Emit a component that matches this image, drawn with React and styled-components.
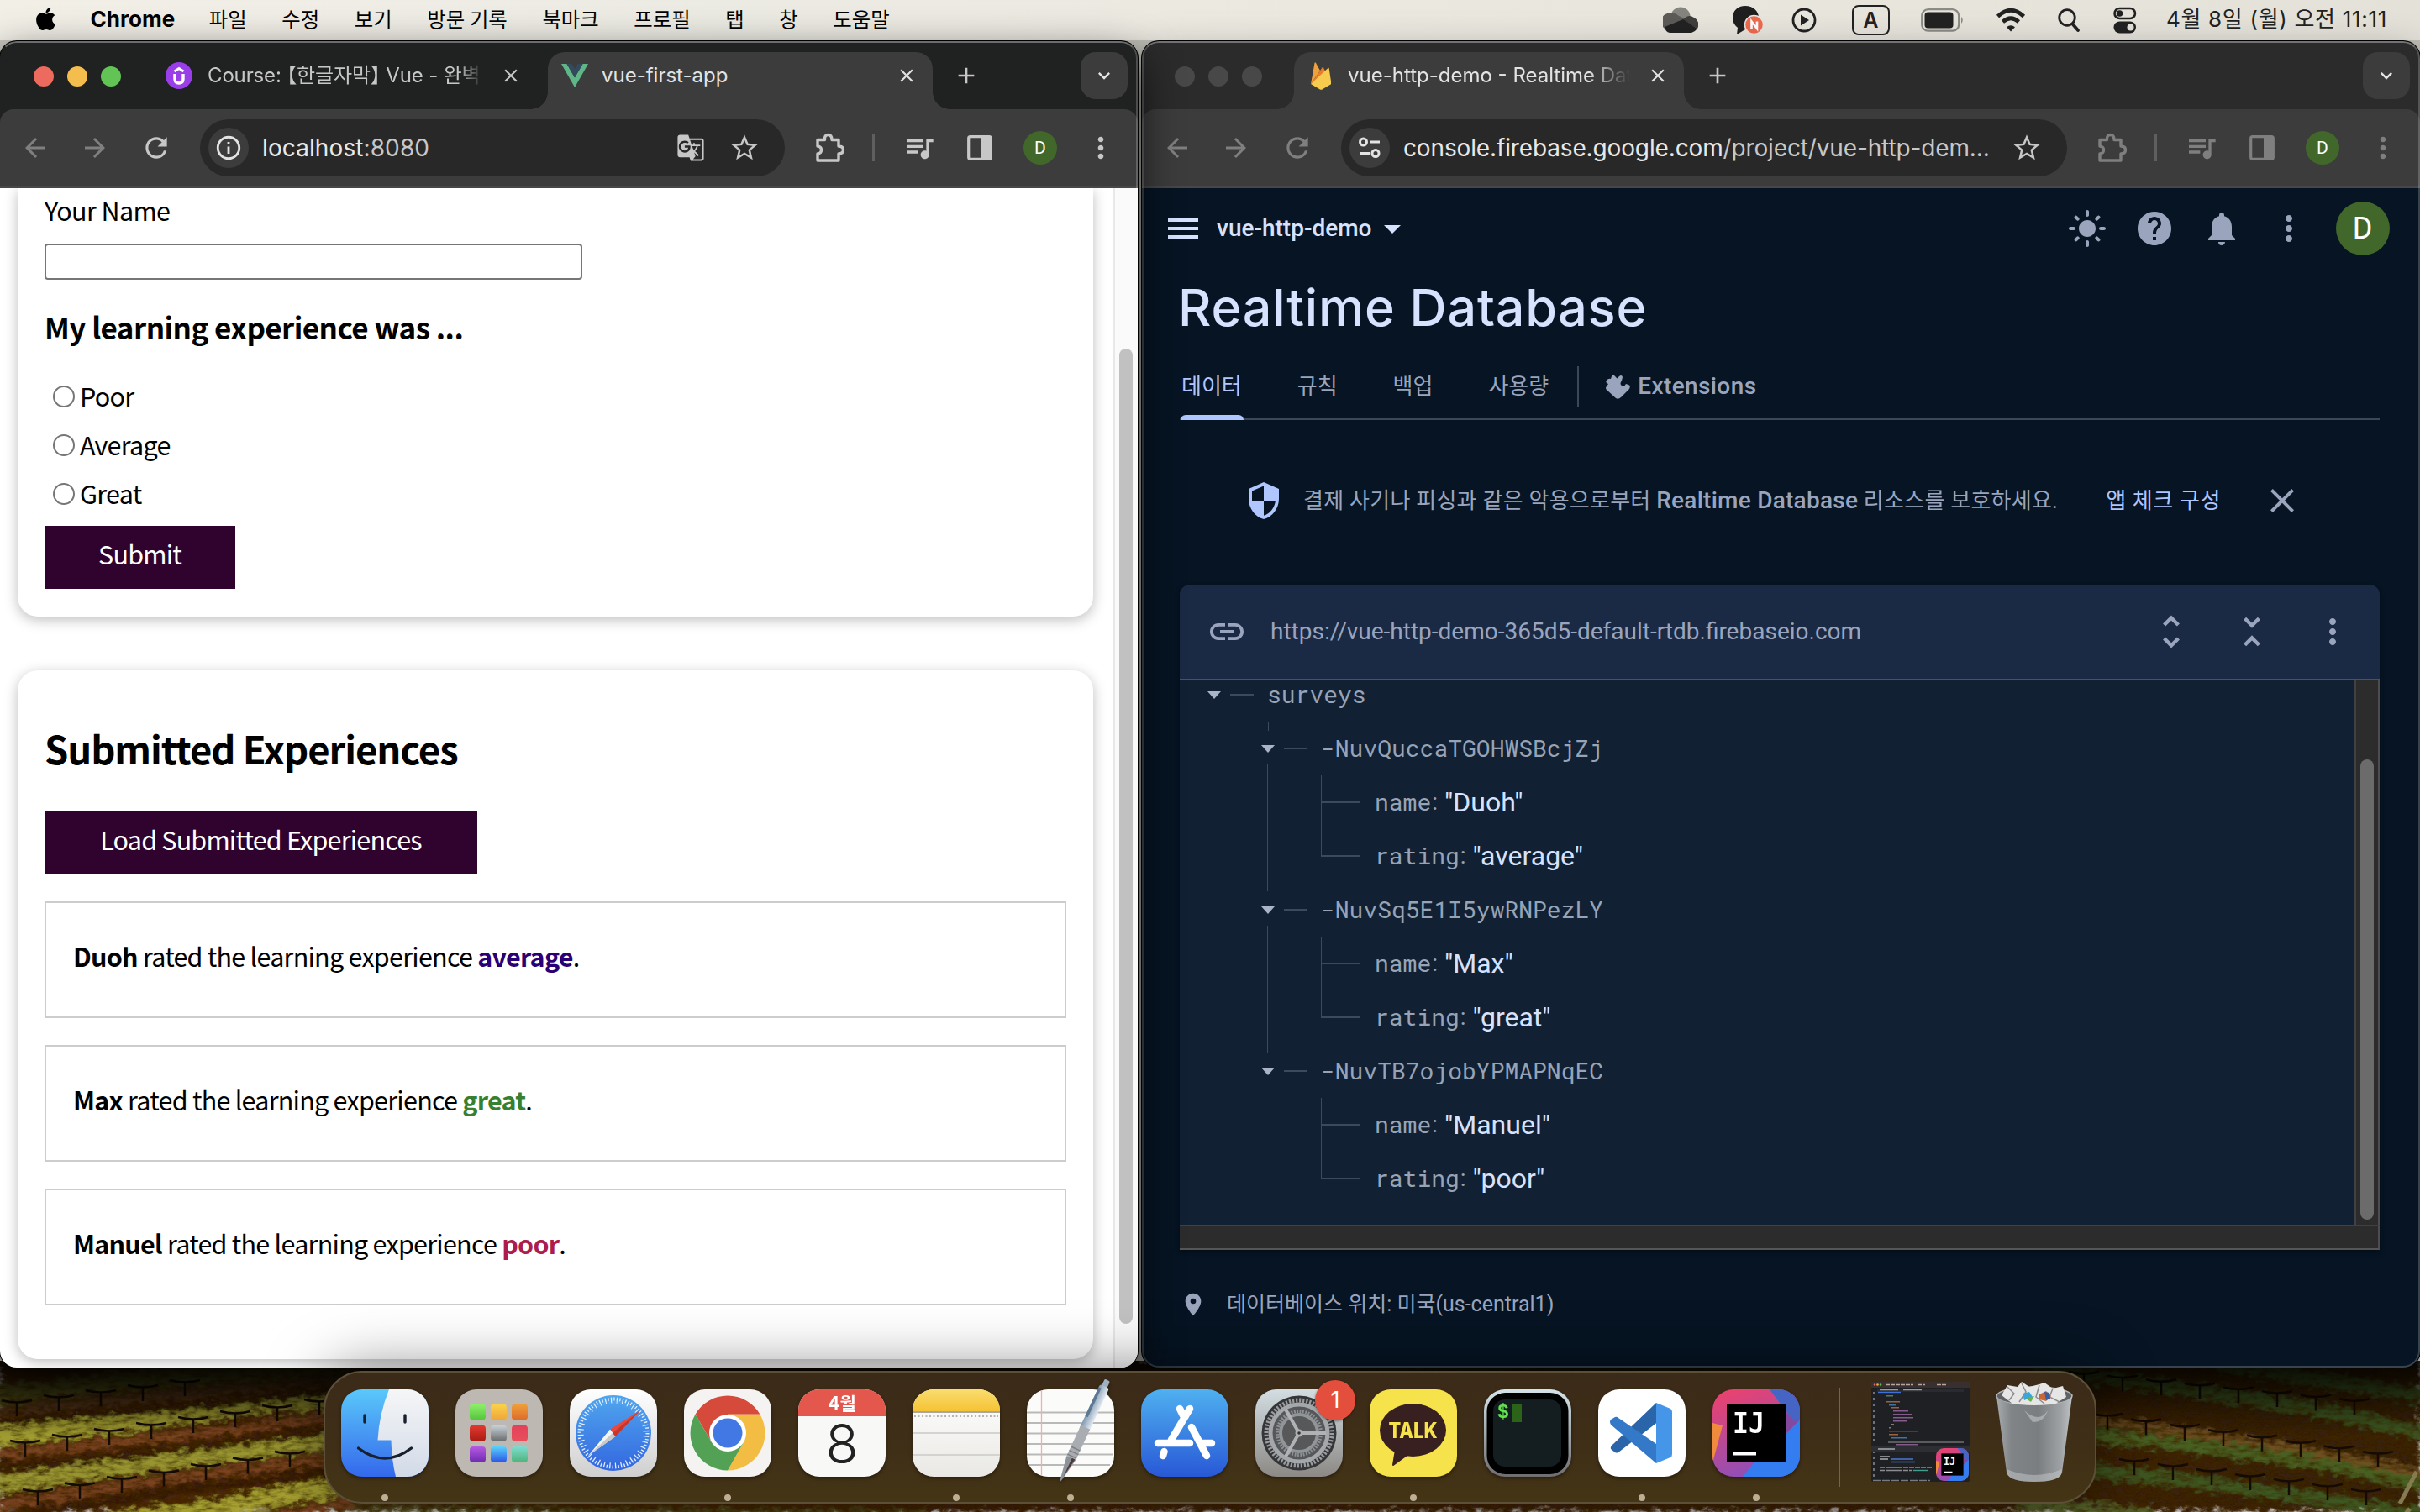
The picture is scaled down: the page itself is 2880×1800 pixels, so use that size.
import React from "react";
import styled, { createGlobalStyle, css } from "styled-components";
import { FaApple } from "react-icons/fa";
import {
  MdArrowBack, MdArrowForward, MdRefresh, MdGTranslate, MdStarBorder, MdQueueMusic, MdMoreVert, MdClose, MdAdd,
  MdKeyboardArrowDown, MdMenu, MdArrowDropDown, MdLightMode, MdHelp, MdNotifications, MdSecurity, MdLink,
  MdUnfoldMore, MdUnfoldLess, MdLocationOn, MdOutlineInfo,
} from "react-icons/md";

const UI = `"Inter", "Noto Sans CJK KR", sans-serif`;
const PAGE = `"Noto Sans CJK KR", sans-serif`;
const CONSOLE = `"Roboto", "Noto Sans CJK KR", sans-serif`;
const MONO = `"Roboto Mono", "Liberation Mono", monospace`;

const Global = createGlobalStyle`
  *, *::before, *::after { box-sizing: border-box; }
  body { margin: 0; background: #1c1108; }
  svg { display: block; flex: none; }
`;

/* ---------- desktop ---------- */
const Desktop = styled.div`
  position: relative;
  display: flex;
  flex-direction: column;
  width: 2880px;
  height: 1800px;
  overflow: hidden;
  font-family: ${UI};
  background: linear-gradient(90deg, #c9c8c0, #bfbdb5);
`;
const WallpaperSvg = styled.svg`
  position: absolute;
  left: 0;
  bottom: 0;
`;
const MenuBar = styled.header`
  position: relative;
  display: flex;
  justify-content: space-between;
  align-items: center;
  height: 48px;
  padding: 0 39px 0 39px;
  background: linear-gradient(90deg, #f2efe7 0%, #ecebe3 30%, #ece9e1 48%, #e8e5dd 75%, #e4e1d9 100%);
  color: #000;
`;
const MenuItems = styled.div`
  display: flex;
  align-items: center;
  gap: 41.6px;
  height: 46px;
  margin-bottom: 3px;
  font-size: 24.4px;
  line-height: 46px;
  word-spacing: -1px;
  > svg { margin: -1px -4px 0 0; }
`;
const AppName = styled.b`
  font-size: 26px;
  font-weight: 700;
  margin: 0 -1px 0 0;
`;
const StatusItems = styled.div`
  display: flex;
  align-items: center;
  color: #222;
`;
const Slot = styled.span`
  display: flex;
  flex: none;
  justify-content: center;
  align-items: center;
  width: ${(p) => p.$w || 40}px;
  height: ${(p) => p.$h || p.$w || 40}px;
  margin-left: ${(p) => p.$ml || 0}px;
  color: ${(p) => p.$c || "inherit"};
`;
const Clock = styled.span`
  margin-left: 35px;
  font-size: 26px;
  line-height: 44px;
  letter-spacing: 0.7px;
  margin-bottom: 3px;
  white-space: nowrap;
`;
const Windows = styled.main`
  position: relative;
  display: flex;
  gap: 5px;
  height: 1579px;
  margin-top: 1px;
`;

/* ---------- browser window ---------- */
const Window = styled.section`
  position: relative;
  display: flex;
  flex-direction: column;
  flex: none;
  width: ${(p) => p.$w}px;
  border-radius: 20px;
  overflow: hidden;
  z-index: ${(p) => (p.$front ? 2 : 1)};
  background: ${(p) => (p.$front ? "#202121" : "#2b2b2b")};
  box-shadow: 0 0 0 1px #000, 0 18px 50px ${(p) => (p.$front ? "rgba(0,0,0,.75)" : "rgba(0,0,0,.4)")};
  &::after {
    content: "";
    position: absolute;
    inset: 0;
    border-radius: 20px;
    border: 2px solid rgba(255, 255, 255, 0.2);
    border-top-color: rgba(255, 255, 255, 0.34);
    ${(p) => p.$front && css`border-left-color: transparent; border-bottom-color: transparent;`}
    pointer-events: none;
  }
`;
const TabStrip = styled.div`
  display: flex;
  align-items: flex-end;
  height: 81px;
  padding: 0 12px 0 ${(p) => p.$pl}px;
`;
const Lights = styled.div`
  display: flex;
  align-items: center;
  gap: 16px;
  height: 56px;
  margin-bottom: 11px;
`;
const Light = styled.i`
  width: 24px;
  height: 24px;
  border-radius: 50%;
  background: ${(p) => p.$c};
`;
const Tab = styled.div`
  position: relative;
  display: flex;
  align-items: center;
  flex: none;
  width: ${(p) => p.$w}px;
  height: 68px;
  margin-left: ${(p) => p.$ml}px;
  padding: 0 18px 12px 16px;
  border-radius: 20px 20px 0 0;
  color: ${(p) => (p.$active ? "#e3e3e3" : "#c7c7c7")};
  ${(p) => p.$active && css`
    background: #3c3c3c;
    &::before, &::after {
      content: "";
      position: absolute;
      bottom: 0;
      width: 20px;
      height: 20px;
      background: radial-gradient(circle at 0 0, transparent 19.5px, #3c3c3c 20px);
    }
    &::before { left: -20px; }
    &::after { right: -20px; background: radial-gradient(circle at 100% 0, transparent 19.5px, #3c3c3c 20px); }
  `}
`;
const TabTitle = styled.span`
  flex: 1;
  margin-left: ${(p) => p.$ml || 16}px;
  margin-right: 20px;
  overflow: hidden;
  font-size: 24px;
  font-weight: 400;
  line-height: 40px;
  white-space: nowrap;
  letter-spacing: ${(p) => p.$ls || 0}px;
  font-feature-settings: "halt";
  ${(p) => p.$fade && css`
    mask-image: linear-gradient(90deg, #000 calc(100% - ${p.$fade}px), transparent);
  `}
`;
const ChevronButton = styled.div`
  display: flex;
  justify-content: center;
  align-items: center;
  width: 56px;
  height: 56px;
  margin: 0 0 12px auto;
  border-radius: 18px;
  background: #3c3c3c;
  color: #e3e3e3;
`;
const Toolbar = styled.div`
  display: flex;
  align-items: center;
  height: 94px;
  padding: 1px 0 0 ${(p) => p.$pl}px;
  border-radius: 16px 16px 0 0;
  border-bottom: 3px solid #474747;
  background: #3c3c3c;
  color: ${(p) => (p.$dim ? "#7f7f7f" : "#c7c7c7")};
`;
const Omnibox = styled.div`
  display: flex;
  align-items: center;
  flex: none;
  width: ${(p) => p.$w}px;
  height: 68px;
  margin-left: ${(p) => p.$ml}px;
  padding: 0 29px 0 10px;
  border-radius: 34px;
  background: #282828;
  color: #c7c7c7;
`;
const SiteInfo = styled.span`
  display: flex;
  justify-content: center;
  align-items: center;
  flex: none;
  width: 48px;
  height: 48px;
  border-radius: 50%;
  background: #3c3c3c;
  color: #e3e3e3;
`;
const Address = styled.span`
  margin-left: 16px;
  margin-right: auto;
  font-size: 28px;
  line-height: 40px;
  white-space: nowrap;
  letter-spacing: ${(p) => p.$ls || 0}px;
  color: #c7c7c7;
  b { font-weight: 400; color: #e8e8e8; }
`;
const Divider = styled.i`
  width: 3px;
  height: 32px;
  margin-left: ${(p) => p.$ml}px;
  background: #5f5f5f;
`;
const Avatar = styled.span`
  display: flex;
  flex: none;
  justify-content: center;
  align-items: center;
  width: ${(p) => p.$size}px;
  height: ${(p) => p.$size}px;
  margin-left: ${(p) => p.$ml}px;
  border-radius: 50%;
  background: #41682a;
  color: #fff;
  font: 400 ${(p) => p.$fs}px/1 "Roboto", sans-serif;
`;

/* ---------- survey page ---------- */
const SurveyPage = styled.div`
  display: flex;
  flex: 1;
  background: #fff;
  font-family: ${PAGE};
  font-size: 30.5px;
  letter-spacing: -0.75px;
  color: #000;
  overflow: hidden;
`;
const SurveyColumn = styled.div`
  display: flex;
  flex: 1;
  flex-direction: column;
  gap: 64px;
  height: 1500px;
  padding: 0 24px 0 21px;
`;
const Card = styled.div`
  display: flex;
  flex-direction: column;
  align-items: flex-start;
  flex: none;
  height: ${(p) => p.$h}px;
  padding: ${(p) => p.$pt}px 32px 0;
  border-radius: ${(p) => (p.$cut ? "0 0 24px 24px" : "24px")};
  background: #fff;
  box-shadow: 0 4px 16px rgba(0, 0, 0, 0.26);
`;
const FieldLabel = styled.label`
  letter-spacing: -0.6px;
  line-height: 42px;
`;
const TextField = styled.div`
  width: 640px;
  height: 43px;
  margin-top: 19px;
  border: 2px solid #767676;
  border-radius: 4px;
`;
const GroupTitle = styled.h3`
  margin: 34px 0 0;
  font-size: 35px;
  font-weight: 700;
  letter-spacing: -0.58px;
  line-height: 44px;
`;
const RadioList = styled.div`
  display: flex;
  flex-direction: column;
  gap: 14px;
  margin-top: 39px;
  padding-left: 10px;
`;
const RadioRow = styled.label`
  display: flex;
  align-items: center;
  gap: 6px;
  height: 44px;
`;
const RadioText = styled.span`
  margin-bottom: 2px;
`;
const RadioDot = styled.i`
  width: 26px;
  height: 26px;
  border: 2px solid #767676;
  border-radius: 50%;
`;
const ActionButton = styled.div`
  width: ${(p) => p.$w}px;
  height: 75px;
  margin-top: ${(p) => p.$mt}px;
  background: #30022e;
  color: #fff;
  text-align: center;
  letter-spacing: -0.8px;
  line-height: 66px;
  white-space: nowrap;
`;
const SectionTitle = styled.h2`
  margin: 0;
  font-size: 45.4px;
  font-weight: 700;
  letter-spacing: -1.05px;
  line-height: 56px;
`;
const ResultItem = styled.div`
  width: 1216px;
  height: 139px;
  margin-top: 32px;
  padding-left: 32px;
  border: 2px solid #ccc;
  line-height: 127px;
  white-space: nowrap;
`;
const Rating = styled.b`
  color: ${(p) => ({ average: "#2c0075", great: "#36802f", poor: "#ad1c4e" })[p.$kind]};
`;
const PageScroll = styled.div`
  width: 29px;
  padding: 191px 0 0 5px;
  border-left: 2px solid #e8e8e8;
  background: #fafafa;
`;
const PageThumb = styled.div`
  width: 16px;
  height: 1161px;
  border-radius: 8px;
  background: #c1c1c1;
`;

/* ---------- firebase console ---------- */
const Console = styled.div`
  flex: 1;
  display: flex;
  flex-direction: column;
  background: #061423;
  font-family: ${CONSOLE};
  color: #9aa5bd;
`;
const ConsoleBar = styled.div`
  display: flex;
  align-items: center;
  height: 96px;
  padding: 0 36px 0 25px;
`;
const ProjectName = styled.span`
  margin-left: 16px;
  font-size: 28px;
  font-weight: 500;
  line-height: 40px;
  color: #d7e2ff;
`;
const ConsoleTitle = styled.h1`
  margin: 6px 0 0 43px;
  font: 500 61px/80px "Inter", sans-serif;
  letter-spacing: 0.8px;
  color: #d7e2ff;
`;
const Tabs = styled.nav`
  display: flex;
  align-items: center;
  height: 92px;
  margin: 2px 48px 0 45px;
  padding-top: 14px;
  border-bottom: 2px solid #3c4858;
  font-size: 26px;
  line-height: 40px;
`;
const ConsoleTab = styled.span`
  position: relative;
  margin-left: ${(p) => p.$ml}px;
  padding: 0 1px;
  white-space: nowrap;
  color: ${(p) => (p.$active ? "#b0c6ff" : "inherit")};
  ${(p) => p.$active && css`
    &::after {
      content: "";
      position: absolute;
      left: 0;
      right: -1px;
      bottom: -20px;
      height: 6px;
      border-radius: 6px 6px 0 0;
      background: #b0c6ff;
    }
  `}
`;
const TabRule = styled.i`
  width: 2px;
  height: 48px;
  margin-left: 33px;
  background: #3c4858;
`;
const ExtensionsLabel = styled.span`
  margin-left: 9px;
  font-size: 28px;
  font-weight: 500;
  letter-spacing: 0.4px;
`;
const Banner = styled.div`
  display: flex;
  align-items: center;
  height: 80px;
  margin: 56px 0 60px 121px;
  font-size: 26px;
  line-height: 40px;
  white-space: nowrap;
  b { font-size: 28px; font-weight: 500; }
`;
const BannerText = styled.span`
  margin-left: 23px;
  letter-spacing: 0.25px;
`;
const BannerLink = styled.span`
  margin-left: 57px;
  letter-spacing: 0.6px;
  color: #b0c6ff;
`;
const Panel = styled.div`
  margin: 0 48px 0 45px;
  height: 792px;
  display: flex;
  flex-direction: column;
  border-radius: 12px 12px 0 0;
  box-shadow: 0 2px 6px rgba(0, 0, 0, 0.4);
  overflow: hidden;
`;
const PanelHead = styled.div`
  display: flex;
  align-items: center;
  flex: none;
  height: 114px;
  padding-left: 32px;
  border-bottom: 2px solid #44546f;
  background: #1b2a44;
`;
const DbUrl = styled.span`
  margin-left: 28px;
  margin-right: auto;
  font-size: 28px;
  line-height: 38px;
`;
const PanelBody = styled.div`
  display: grid;
  grid-template-columns: 1fr 30px;
  grid-template-rows: 1fr 30px;
  flex: 1;
  min-height: 0;
`;
const Tree = styled.div`
  padding-left: 33px;
  background: #112033;
  overflow: hidden;
`;
const TreeTrack = styled.div`
  padding: 94px 0 0 5px;
  border-left: 2px solid #424242;
  border-right: 2px solid #4d4d4d;
  background: #2c2c2c;
`;
const TreeThumb = styled.div`
  width: 16px;
  height: 548px;
  border-radius: 8px;
  background: #6b6b6b;
`;
const TreeFloor = styled.div`
  grid-column: 1 / 3;
  border-top: 2px solid #414141;
  border-bottom: 2px solid #565656;
  border-right: 2px solid #4d4d4d;
  background: #2c2c2c;
`;
const NodeRow = styled.div`
  display: flex;
  align-items: center;
  height: ${(p) => p.$h || 64}px;
  font: 28px/40px ${MONO};
  color: #97a3b6;
`;
const Caret = styled.i`
  border: 8px solid transparent;
  border-top: 9px solid #a9b4c8;
  border-bottom: 0;
`;
const Dash = styled.i`
  width: 28px;
  height: 2px;
  margin: 0 16px 0 11px;
  background: #3c4a5e;
`;
const Branch = styled.div`
  margin: 15px 0 0 64px;
`;
const NodeHead = styled(NodeRow)`
  position: relative;
  ${(p) => p.$first && css`
    &::before {
      content: "";
      position: absolute;
      left: 7.5px;
      top: 0;
      height: 11px;
      border-left: 1.5px solid #3c4a5e;
    }
  `}
`;
const Leaves = styled.div`
  position: relative;
  display: flex;
  flex-direction: column;
  padding-left: 70px;
  ${(p) => !p.$last && css`
    &::before {
      content: "";
      position: absolute;
      left: 7px;
      top: -13px;
      height: 151px;
      border-left: 1.5px solid #3c4a5e;
    }
  `}
`;
const Leaf = styled.div`
  position: relative;
  display: flex;
  align-items: center;
  height: 64px;
  padding-left: 65px;
  font: 28px/40px ${MONO};
  color: #97a3b6;
  white-space: nowrap;
  &::before {
    content: "";
    position: absolute;
    left: 1px;
    top: ${(p) => (p.$first ? 0 : -32)}px;
    width: 47px;
    height: ${(p) => (p.$first ? 33 : 65)}px;
    border-left: 1.5px solid #3c4a5e;
    border-bottom: 2px solid #3c4a5e;
  }
`;
const Value = styled.span`
  margin-left: 8px;
  font: 32px/40px "Roboto", sans-serif;
  color: #d7e2ff;
`;
const Colon = styled.span`
  margin-left: 1px;
  font: 28px/40px "Roboto", sans-serif;
`;
const Location = styled.div`
  display: flex;
  align-items: center;
  gap: 24px;
  margin: 45px 0 0 45px;
  font-size: 25px;
  line-height: 40px;
`;

/* ---------- dock ---------- */
const DockArea = styled.footer`
  position: relative;
  z-index: 3;
  display: flex;
  justify-content: center;
  padding-top: 4px;
`;
const Dock = styled.div`
  display: flex;
  width: 2110px;
  height: 158px;
  padding: 20px 0 0 19px;
  border: 2px solid #5c4f38;
  border-radius: 46px;
  background: linear-gradient(180deg, #3a2a18 0%, #402f17 60%, #443515 100%);
  box-shadow: 0 0 70px rgba(0, 0, 0, 0.5);
`;
const DockItem = styled.div`
  position: relative;
  display: flex;
  flex: none;
  flex-direction: column;
  align-items: center;
  width: 104px;
  margin-right: 32px;
  svg { overflow: visible; filter: drop-shadow(0 2px 2px rgba(0, 0, 0, 0.4)); }
`;
const RunningDot = styled.i`
  width: 8px;
  height: 8px;
  margin-top: 21px;
  border-radius: 50%;
  background: #bfae94;
`;
const Badge = styled.span`
  position: absolute;
  right: -15px;
  top: -11px;
  width: 48px;
  height: 48px;
  border-radius: 50%;
  background: #e44f3d;
  color: #fff;
  font-size: 27px;
  line-height: 48px;
  text-align: center;
  box-shadow: 0 1px 3px rgba(0, 0, 0, 0.4);
`;
const DockRule = styled.i`
  flex: none;
  width: 2px;
  height: 118px;
  margin: -2px 37px 0 14px;
  background: #73644c;
`;
const DockExtra = styled.div`
  flex: none;
  margin-top: -9px;
  margin-right: 31px;
`;

/* ---------- drawings ---------- */
const vines = (n, x0, y0, dx, slope) =>
  Array.from({ length: n }, (_, i) => {
    const x = x0 + i * dx;
    const y = y0 + i * dx * slope;
    return `M${x} ${y + 16}V${y}M${x - 18} ${y - 3}Q${x} ${y + 2} ${x + 18} ${y - 3}`;
  }).join("");

const Wallpaper = () => (
  <WallpaperSvg width="2880" height="180" viewBox="0 0 2880 180">
    <defs>
      <filter id="grass" x="0" y="0" width="100%" height="100%">
        <feTurbulence type="fractalNoise" baseFrequency="0.09 0.14" numOctaves="3" seed="4" result="n" />
        <feGaussianBlur in="SourceGraphic" stdDeviation="2.5" result="b" />
        <feDisplacementMap in="b" in2="n" scale="20" xChannelSelector="R" yChannelSelector="G" result="d" />
        <feTurbulence type="fractalNoise" baseFrequency="0.07 0.2" numOctaves="4" seed="9" result="m0" />
        <feColorMatrix in="m0" type="matrix" values="0 0 0 0 0.05  0 0 0 0 0.02  0 0 0 0 0  0 1.9 0 0 -0.76" result="s" />
        <feComposite in="s" in2="d" operator="in" result="m" />
        <feMerge><feMergeNode in="d" /><feMergeNode in="m" /></feMerge>
      </filter>
      <linearGradient id="soil" x1="0" x2="1"><stop offset="0" stopColor="#4a2710" /><stop offset="1" stopColor="#38200f" /></linearGradient>
      <linearGradient id="topShade" x1="0" x2="0" y1="0" y2="1"><stop offset="0" stopColor="#000" stopOpacity=".8" /><stop offset=".5" stopColor="#000" stopOpacity="0" /></linearGradient>
    </defs>
    <g filter="url(#grass)">
      <rect width="2880" height="180" fill="url(#soil)" />
      <g fill="none" strokeWidth="22">
        <path d="M-20 42L180 22L420 2" stroke="#56541a" />
        <path d="M-20 92L150 74L300 52L420 46" stroke="#a09c32" />
        <path d="M-20 150L100 132L200 118L300 106L420 92" stroke="#989430" />
        <path d="M130 192L260 176L340 160L420 148" stroke="#a59f30" />
        <path d="M400 174L700 180L1100 182" stroke="#4f4a1a" strokeWidth="8" />
      </g>
      <g fill="none" stroke="#7c4521" strokeWidth="10">
        <path d="M-20 114L150 96L420 64" /><path d="M-20 62L200 42L420 20" stroke="#57381b" /><path d="M-20 176L200 140L420 114" /><path d="M330 186L420 168" />
      </g>
      <g fill="none" stroke="#341a0b" strokeWidth="10"><path d="M-20 130L150 112L420 80" /><path d="M-20 192L200 156L420 128" /><path d="M-20 74L200 56L420 34" /></g>
      <g fill="none" stroke="#3e5620" strokeWidth="16">
        <path d="M2420 6L2600 34L2750 56L2900 90" />
        <path d="M2440 84L2600 100L2750 120L2900 150" stroke="#475e22" />
        <path d="M2440 124L2640 148L2800 170L2900 188" />
        <path d="M2400 168L2560 184" stroke="#55622a" /><path d="M2640 4L2900 44" />
      </g>
      <g fill="none" stroke="#6e5024" strokeWidth="10"><path d="M2440 64L2620 88L2750 108L2900 138" /></g>
    </g>
    <path d={vines(5, 20, 50, 50, -0.12) + vines(8, 30, 98, 50, -0.14) + vines(7, 45, 156, 50, -0.15) + vines(8, 2480, 16, 46, 0.1) + vines(8, 2508, 66, 46, 0.14) + vines(7, 2540, 120, 46, 0.13)} stroke="#150b05" strokeWidth="2.5" fill="none" />
    <path d="M2876 132L2856 170M2868 176L2856 190" stroke="#857a50" strokeWidth="5" />
    <rect width="2880" height="180" fill="url(#topShade)" />
  </WallpaperSvg>
);

const OneDrive = () => (
  <svg width="42" height="32" viewBox="0 0 42 32">
    <circle cx="21" cy="12" r="11.5" fill="#85847f" />
    <path d="M4 27a10 10 0 0 1 6-19q5-1 9 3l9 4-20 14z" fill="#5c5b58" />
    <path d="M24 16q6-8 13-3a9 9 0 0 1 4 13z" fill="#403f3d" />
    <path d="M2 24L24 15L41 26Q38 30 34 31H8Q3 30 2 24z" fill="#222" />
  </svg>
);
const TalkStatus = () => (
  <svg width="38" height="36" viewBox="0 0 38 36">
    <path d="M16 1C7 1 1 7 1 15c0 5 2 9 6 12l-1 8 10-6c9 0 16-6 16-14S25 1 16 1z" fill="#1f1f1f" />
    <circle cx="26.500" cy="23.500" r="11" fill="#ee6a50" stroke="#e8e5dd" strokeWidth="1.500" />
    <path d="M23.500 28v-8.500l6.500 8.500v-8.500" fill="none" stroke="#fff" strokeWidth="2.600" />
  </svg>
);
const PlayStatus = () => (
  <svg width="30" height="34" viewBox="0 0 30 34">
    <circle cx="15" cy="17" r="13" fill="none" stroke="#222" strokeWidth="2.800" />
    <path d="M11 10.500v13l10-6.500z" fill="#222" />
  </svg>
);
const Battery = () => (
  <svg width="52" height="28" viewBox="0 0 52 28">
    <rect x="1.200" y="1.200" width="44" height="25.500" rx="7.500" fill="none" stroke="#8b8a85" strokeWidth="2.200" />
    <rect x="4.500" y="4.500" width="34" height="19" rx="4" fill="#222" />
    <path d="M48 10q3.500 4 0 8z" fill="#8b8a85" />
  </svg>
);
const InputSource = styled.span`
  display: flex;
  justify-content: center;
  align-items: center;
  width: 45px;
  height: 36px;
  margin-left: 42px;
  border: 2.5px solid #222;
  border-radius: 8px;
  font-size: 25px;
  font-weight: 600;
  line-height: 30px;
`;
const Wifi = () => (
  <svg width="36" height="30" viewBox="0 0 36 30" fill="none" stroke="#222" strokeWidth="4.600">
    <path d="M2.500 10.500Q18-4 33.500 10.500" /><path d="M8.500 17Q18 8.500 27.500 17" /><path d="M13 23.300Q18 19 23 23.300L18 28.500z" fill="#222" stroke="none" />
  </svg>
);
const Loupe = () => (
  <svg width="27" height="30" viewBox="0 0 27 30" fill="none" stroke="#222">
    <circle cx="11" cy="12" r="9.300" strokeWidth="2.800" /><path d="M17.500 19.500L24 27" strokeWidth="3.800" strokeLinecap="round" />
  </svg>
);
const ControlCentre = () => (
  <svg width="28" height="32" viewBox="0 0 28 32">
    <rect x="1.500" y="2" width="24.500" height="12" rx="6" fill="none" stroke="#222" strokeWidth="2.600" /><circle cx="7.500" cy="8" r="3.800" fill="#222" />
    <rect x=".5" y="17.500" width="26.500" height="14" rx="7" fill="#222" /><circle cx="20.500" cy="24.500" r="4" fill="#e6e3db" />
  </svg>
);
const UdemyMark = () => (
  <svg width="32" height="32" viewBox="0 0 32 32"><circle cx="16" cy="16" r="16" fill="#9a3eea" />
    <path d="M11 14v6q0 5 5 5t5-5v-6" fill="none" stroke="#fff" strokeWidth="3.400" /><path d="M10.500 11L16 7.500L21.500 11" fill="none" stroke="#fff" strokeWidth="2.800" />
  </svg>
);
const VueMark = () => (
  <svg width="32" height="28" viewBox="0 0 32 28"><path d="M0 0h6.500L16 16.500L25.500 0H32L16 28z" fill="#5fb787" /><path d="M6.500 0h6L16 6l3.500-6h6L16 16.500z" fill="#35495e" /></svg>
);
const FirebaseMark = () => (
  <svg width="24" height="33" viewBox="0 0 24 33">
    <path d="M0 26L4.500 1q.6-1.500 1.500 0l5 9z" fill="#f0a23a" /><path d="M0 26L13.500 6.500q.7-1 1.400 0L19 14z" fill="#e57f2e" />
    <path d="M0 26L20.500 7q1-.8 1.200.5L24.500 26L13.500 32.500q-1.300.6-2.600 0z" fill="#f7cb4d" />
  </svg>
);
const Puzzle = () => (
  <svg width="38" height="38" viewBox="0 0 38 38" fill="none" stroke="currentColor" strokeWidth="3.400" strokeLinejoin="round">
    <path d="M5 9.500H13.500Q13 3.500 17.500 3.500T22 9.500H30V17Q35.500 17 35.500 21.500T30 26V34H5V26Q9.500 25.500 9.500 21.500T5 17z" />
  </svg>
);
const SidePanel = () => (
  <svg width="30" height="30" viewBox="0 0 30 30"><rect x="1.700" y="1.700" width="26.600" height="26.600" rx="2" fill="none" stroke="currentColor" strokeWidth="3.200" /><rect x="17" y="2" width="11" height="26" fill="currentColor" /></svg>
);
const Tune = () => (
  <svg width="26" height="26" viewBox="0 0 26 26" fill="none" stroke="currentColor" strokeWidth="3">
    <circle cx="5.500" cy="6" r="4" /><path d="M13 6h12M1 19.500h12" /><circle cx="20" cy="19.500" r="4" />
  </svg>
);
const ExtensionMark = () => (
  <svg width="30" height="30" viewBox="0 0 30 30" fill="currentColor">
    <path d="M8 3q2-3 4 0l2.500 2.500L17 3q3-2.500 4 1l-1 4q-3 4 0 6t5-2l3 1q3 1 1 5L19 28q-3 3-6 1L2 19q-2-2 0-4l2-3Q0 11 2 8t5-2z" />
  </svg>
);

const Squircle = ({ fill, children }) => (
  <svg width="104" height="104" viewBox="0 0 104 104"><rect width="104" height="104" rx="25" fill={fill} />{children}</svg>
);
const Gradient = ({ id, from, to, x2 = 0, y2 = 1 }) => (
  <linearGradient id={id} x1="0" y1="0" x2={x2} y2={y2}><stop offset="0" stopColor={from} /><stop offset="1" stopColor={to} /></linearGradient>
);
const FinderIcon = () => (
  <Squircle fill="url(#fL)">
    <defs><Gradient id="fL" from="#5ac8fa" to="#3468ec" /><Gradient id="fR" from="#f5f6f7" to="#d2dae8" /><clipPath id="sq"><rect width="104" height="104" rx="25" /></clipPath></defs>
    <path clipPath="url(#sq)" d="M57 0Q45 30 43.500 60.500H59.500Q60 84 65 104H104V0z" fill="url(#fR)" />
    <path d="M28 31v8M76 31v8M20.500 70Q52 94 83.500 70" fill="none" stroke="#17202c" strokeWidth="3.400" strokeLinecap="round" />
  </Squircle>
);
const padColors = [["#8ef06a", "#55c43c"], ["#f9d34a", "#efa53b"], ["#f0a03a", "#dd6b2b"], ["#e23a2f", "#a91c14"], ["#c9d2d9", "#6a6c6e"], ["#e4415a", "#e8505c"], ["#b65be2", "#6f2ab0"], ["#5ad2fb", "#2a55e8"], ["#7fdcd0", "#4db47a"]];
const LaunchpadIcon = () => (
  <Squircle fill="#bdb9b2">
    <defs>{padColors.map(([a, b], i) => <Gradient key={i} id={`pad${i}`} from={a} to={b} />)}</defs>
    {padColors.map((_, i) => <rect key={i} x={17 + (i % 3) * 25} y={17.5 + Math.floor(i / 3) * 25.2} width="19" height="19" rx="4" fill={`url(#pad${i})`} />)}
  </Squircle>
);
const SafariIcon = () => (
  <Squircle fill="url(#sfBg)">
    <defs><Gradient id="sfBg" from="#ffffff" to="#cfcfcf" /><Gradient id="sfC" from="#4fa5ee" to="#3468e0" /></defs>
    <circle cx="52" cy="52" r="45" fill="url(#sfC)" />
    <circle cx="52" cy="52" r="39" fill="none" stroke="#e4effb" strokeWidth="7" strokeDasharray="1.300 2.103" />
    <circle cx="52" cy="52" r="36.500" fill="none" stroke="url(#sfC)" strokeWidth="4" strokeDasharray="3.900 2.500" strokeDashoffset="1.500" />
    <path d="M84 25L48 47.500L54.500 56z" fill="#e8493c" /><path d="M22 79L48 47.500L54.500 56z" fill="#f4f4f4" /><path d="M22 79L51 52L54.500 56z" fill="#c9c9c9" /><path d="M84 25L51 52L54.500 56z" fill="#c7362c" />
  </Squircle>
);
const ChromeIcon = () => (
  <Squircle fill="#f4f3f1">
    <path d="M13.500 29.750A44.500 44.500 0 0 1 90.500 29.750H52L33 63z" fill="#d64a3b" />
    <path d="M90.500 29.750A44.500 44.500 0 0 1 52 96.500L71 63L52 29.750z" fill="#f3bc43" />
    <path d="M52 96.500A44.500 44.500 0 0 1 13.500 29.750L33 63L71 63z" fill="#52a154" />
    <circle cx="52" cy="52" r="22" fill="#fff" /><circle cx="52" cy="52" r="17.500" fill="#4278e4" />
  </Squircle>
);
const CalendarIcon = () => (
  <Squircle fill="#f8f8f7">
    <path d="M0 32V25A25 25 0 0 1 25 0H79A25 25 0 0 1 104 25V32z" fill="#e3574c" />
    <text x="52" y="24" textAnchor="middle" fontFamily={UI} fontSize="21" fontWeight="700" fill="#fff">4월</text>
    <text x="52" y="88" textAnchor="middle" fontFamily="Inter" fontSize="64" fontWeight="300" fill="#222">8</text>
  </Squircle>
);
const NotesIcon = () => (
  <Squircle fill="url(#ntB)">
    <defs><Gradient id="ntY" from="#fadd6e" to="#f5c235" /><Gradient id="ntB" from="#fff" to="#e9e8e4" /></defs>
    <path d="M0 26V25A25 25 0 0 1 25 0H79A25 25 0 0 1 104 25V26z" fill="url(#ntY)" />
    <path d="M0 27H104" stroke="#aaa69b" strokeWidth="2" /><path d="M2 32H102" stroke="#b5b5b5" strokeWidth="2" strokeDasharray="2 2.500" />
    <path d="M0 52H104M0 78H104" stroke="#d4d3d0" strokeWidth="1.800" />
  </Squircle>
);
const TextEditIcon = () => (
  <Squircle fill="#fbfbfa">
    <defs><Gradient id="pen" from="#7f98b0" to="#e4ebf2" x2={1} y2={0} /></defs>
    <path d="M0 27.500H104M0 40H104M0 52.500H104M0 65H104M0 77.500H102M3 90H99" stroke="#b9b9b9" strokeWidth="1.800" /><path d="M17.500 1V103" stroke="#f1aeae" strokeWidth="1.300" />
    <g transform="translate(96 -11) rotate(25)">
      <rect x="-3.500" y="0" width="7" height="12" rx="2" fill="#9fb0c0" /><rect x="-6" y="8" width="12" height="60" rx="3" fill="url(#pen)" /><path d="M-6 12h3.500v38h-3.500z" fill="#5d7893" />
      <rect x="-6" y="62" width="12" height="40" fill="#a9adb1" /><path d="M-6 90h12M-6 95h12M-6 100h12" stroke="#7c8084" strokeWidth="1.500" /><path d="M-6 102h12L1.500 128L0 134L-1.500 128z" fill="#8e9398" /><path d="M1 102h4L1 126z" fill="#4b3a3c" />
    </g>
  </Squircle>
);
const AppStoreIcon = () => (
  <Squircle fill="url(#asB)">
    <defs><Gradient id="asB" from="#4fb0f0" to="#2858d6" /></defs>
    <g fill="none" stroke="#fff" strokeWidth="8.500" strokeLinecap="round">
      <path d="M58 23L36 60M46 23L50 31M60 45L78 79M20 64H58M70 64H84M27.500 74L26 79" />
    </g>
  </Squircle>
);
const SettingsIcon = () => (
  <Squircle fill="url(#stB)">
    <defs><Gradient id="stB" from="#d3dde2" to="#8c8985" /></defs>
    <circle cx="52" cy="52" r="44.500" fill="#35363a" /><circle cx="52" cy="52" r="39" fill="none" stroke="#9a9c9d" strokeWidth="5" strokeDasharray="2.200 1.880" />
    <circle cx="52" cy="52" r="34" fill="#55575a" stroke="#a5a8aa" strokeWidth="5" />
    <circle cx="52" cy="52" r="26" fill="none" stroke="#8f9294" strokeWidth="4" strokeDasharray="1.800 1.600" /><circle cx="52" cy="52" r="22" fill="#57585a" stroke="#929597" strokeWidth="4" />
    <path d="M52 52H84M52 52L36 24M52 52L36 80" stroke="#b0b3b5" strokeWidth="4" /><circle cx="52" cy="52" r="4.500" fill="#b0b3b5" /><circle cx="52" cy="52" r="1.800" fill="#333" />
  </Squircle>
);
const TalkIcon = () => (
  <Squircle fill="#f6e24a">
    <ellipse cx="51.500" cy="48.500" rx="39.500" ry="31.500" fill="#381f20" /><path d="M31 72L28 90L46 77z" fill="#381f20" stroke="#381f20" strokeWidth="2" strokeLinejoin="round" />
    <text x="51.500" y="58" textAnchor="middle" fontFamily="Inter" fontSize="25.500" fontWeight="800" textLength="58" lengthAdjust="spacingAndGlyphs" fill="#f6e24a">TALK</text>
  </Squircle>
);
const TerminalIcon = () => (
  <Squircle fill="url(#tmB)">
    <defs><Gradient id="tmB" from="#d5e3e8" to="#6f6d70" /></defs>
    <rect x="3.500" y="4" width="97" height="97" rx="22" fill="#000" /><rect x="11" y="12" width="81" height="80" rx="14" fill="#141e20" />
    <text x="16" y="34" fontFamily="Liberation Mono" fontSize="23" fontWeight="700" fill="#62e04e">$</text><rect x="34" y="17" width="11" height="22" fill="#2b6319" />
  </Squircle>
);
const CodeIcon = () => (
  <Squircle fill="#fff">
    <path d="M69 16L18 65Q14 68 15 71L20 75Q22 76 24 75L72 38z" fill="#2a64a9" /><path d="M69 88L15 42Q13 38 15 36L20 33Q22 32 24 34L72 67z" fill="#3479c7" />
    <path d="M69 16L86 23Q88 24 88 27V77Q88 80 86 81L69 88z" fill="#4595e8" />
  </Squircle>
);
const IdeaArt = () => (
  <>
    <defs><Gradient id="ijA" from="#f0416a" to="#8f4fb8" x2={0.4} /></defs>
    <g clipPath="url(#sq)"><rect width="104" height="104" fill="url(#ijA)" /><path d="M68 0H104V38L98 40z" fill="#4664c4" /><path d="M104 36L86 54V80L55 80L36 104H104z" fill="#347df0" /><path d="M98 38L104 36L86 54L80 20z" fill="#83489f" /><path d="M0 40L12 43L1 84L0 84z" fill="#f08a3c" /></g>
    <rect x="17" y="17" width="70" height="70" fill="#000" /><text x="24" y="52" fontFamily="DejaVu Sans Mono" fontSize="34" fontWeight="700" textLength="38" lengthAdjust="spacingAndGlyphs" fill="#fff">IJ</text><rect x="25" y="74" width="27" height="4.500" fill="#fff" />
  </>
);
const IdeaIcon = () => <svg width="104" height="104" viewBox="0 0 104 104"><IdeaArt /></svg>;
const codeLines = [[18, 14, 8, "#5aa37a"], [18, 21, 16, "#c47a4a"], [21, 25, 8, "#4a8fd0"], [24, 28, 9, "#c47a4a"], [26, 32, 18, "#a86fb0"], [26, 36, 22, "#a86fb0"], [26, 40, 24, "#a86fb0"], [26, 44, 16, "#a86fb0"], [24, 48, 3, "#999"], [21, 52, 3, "#999"], [21, 56, 34, "#777"], [21, 60, 11, "#c47a4a"], [24, 64, 19, "#4a8fd0"], [26, 68, 62, "#a07a8a"], [29, 72, 26, "#a86fb0"]];
const Thumbnail = () => (
  <svg width="117" height="119" viewBox="0 0 117 119">
    <rect width="117" height="119" rx="2" fill="#1f2024" /><rect width="117" height="7" fill="#37302f" /><path d="M7 9H110V12H7z" fill="#2a2b30" /><path d="M8 12.500H35" stroke="#3f6fd8" strokeWidth="1.400" />
    <circle cx="4" cy="3.500" r="1.300" fill="#e5605a" /><circle cx="7.500" cy="3.500" r="1.300" fill="#e5b04a" /><circle cx="11" cy="3.500" r="1.300" fill="#5bbf50" />
    <path d="M17 3.500H50M55 3.500H64M78 3.500H90" stroke="#b9a59c" strokeWidth="1.500" strokeDasharray="5 1" /><path d="M10 9.500H32M38 9.500H60" stroke="#9a9da5" strokeWidth="1.500" />
    {codeLines.map(([x, y, w, c]) => <rect key={y} x={x} y={y + 2} width={w} height="1.500" fill={c} opacity=".75" />)}
    <path d="M3 12V72M3 82V114" stroke="#6f7279" strokeWidth="2" strokeDasharray="3 4" /><rect x="20" y="71" width="90" height="2" fill="#5a5b5e" /><rect y="77" width="117" height="6" fill="#2d2e33" />
    <path d="M8 80H28M10 89H22M10 92H20" stroke="#a9abb0" strokeWidth="1.500" /><path d="M23 92H50M23 95.500H52" stroke="#4a78d0" strokeWidth="1.500" /><path d="M10 102H72M10 105.500H48" stroke="#8b8d92" strokeWidth="1.400" strokeDasharray="6 1" /><path d="M50 105.500H68" stroke="#3f9f8f" strokeWidth="1.400" /><path d="M2 117.500H70" stroke="#77797e" strokeWidth="1.500" strokeDasharray="9 2" />
    <g transform="translate(77 79) scale(.375)"><IdeaArt /></g>
  </svg>
);
const Trash = () => (
  <svg width="92" height="120" viewBox="0 0 92 120">
    <defs><linearGradient id="tr" x1="0" x2="1"><stop offset="0" stopColor="#a7abae" /><stop offset=".2" stopColor="#808487" /><stop offset=".55" stopColor="#7a7e81" /><stop offset=".85" stopColor="#9ea2a5" /><stop offset="1" stopColor="#c0c3c5" /></linearGradient></defs>
    <ellipse cx="46" cy="17" rx="45" ry="11" fill="#5f6366" stroke="#b6b9bb" strokeWidth="1.500" />
    <path d="M7 16L14 4L26 6L31 0L40 6L52 3L58 1L68 8L80 5L84 18L70 27L46 29L20 26z" fill="#e6e6e6" /><path d="M14 6L22 14L16 22M31 2L36 12L28 24M52 4L48 18L58 26M68 8L64 18L76 24" stroke="#8c8c8c" strokeWidth="1.500" fill="none" />
    <path d="M32 14l8-2 4 6-10 4z" fill="#3ba6d8" /><path d="M52 15l8-4 6 6-6 6-8-2z" fill="#c8683a" /><path d="M58 12l6 1 1 7-5 2z" fill="#395f9e" /><path d="M36 20l10-3-4 7z" fill="#6bb04a" />
    <path d="M1 17Q8 28 46 28T91 17L79 108Q76 119 46 119T13 108z" fill="url(#tr)" /><path d="M13 104Q46 118 79 104L78 110Q74 119 46 119T14 110z" fill="#c7cacc" opacity=".5" />
    <path d="M34 34Q52 50 62 34Q58 48 44 48z" fill="#b9bcbe" opacity=".7" />
  </svg>
);

/* ---------- content ---------- */
const menus = ["파일", "수정", "보기", "방문 기록", "북마크", "프로필", "탭", "창", "도움말"];
const results = [["Duoh", "average"], ["Max", "great"], ["Manuel", "poor"]];
const surveys = [["-NuvQuccaTGOHWSBcjZj", "Duoh", "average"], ["-NuvSq5E1I5ywRNPezLY", "Max", "great"], ["-NuvTB7ojobYPMAPNqEC", "Manuel", "poor"]];
const dockApps = [
  [FinderIcon, true], [LaunchpadIcon], [SafariIcon], [ChromeIcon, true], [CalendarIcon], [NotesIcon, true], [TextEditIcon, true],
  [AppStoreIcon], [SettingsIcon, false, "1"], [TalkIcon, true], [TerminalIcon], [CodeIcon, true], [IdeaIcon, true],
];

const ToolbarTail = () => (
  <>
    <Slot $w={38} $ml={34}><Puzzle /></Slot>
    <Divider $ml={32} />
    <Slot $ml={33}><MdQueueMusic size={40} /></Slot>
    <Slot $ml={32}><SidePanel /></Slot>
    <Avatar $size={40} $ml={32} $fs={21}>D</Avatar>
    <Slot $ml={32}><MdMoreVert size={40} /></Slot>
  </>
);

export default function App() {
  return (
    <Desktop>
      <Global />
      <Wallpaper />
      <MenuBar>
        <MenuItems>
          <FaApple size={31} />
          <AppName>Chrome</AppName>
          {menus.map((m) => <span key={m}>{m}</span>)}
        </MenuItems>
        <StatusItems>
          <Slot $w={42}><OneDrive /></Slot>
          <Slot $w={38} $ml={40}><TalkStatus /></Slot>
          <Slot $w={30} $ml={33}><PlayStatus /></Slot>
          <InputSource>A</InputSource>
          <Slot $w={52} $ml={37}><Battery /></Slot>
          <Slot $w={36} $ml={37}><Wifi /></Slot>
          <Slot $w={27} $ml={38}><Loupe /></Slot>
          <Slot $w={28} $ml={39}><ControlCentre /></Slot>
          <Clock>4월 8일 (월) 오전 11:11</Clock>
        </StatusItems>
      </MenuBar>

      <Windows>
        <Window $w={1354} $front>
          <TabStrip $pl={40}>
            <Lights><Light $c="#ed6a5e" /><Light $c="#f4be4f" /><Light $c="#61c454" /></Lights>
            <Tab $w={459} $ml={36}>
              <Slot $w={32} $ml={1}><UdemyMark /></Slot>
              <TabTitle $fade={30} $ml={18} $ls={-0.15}>Course: 【한글자막】 Vue - 완벽 가이드</TabTitle>
              <Slot $w={26}><MdClose size={26} /></Slot>
            </Tab>
            <Tab $active $w={458} $ml={13}>
              <Slot $w={32}><VueMark /></Slot>
              <TabTitle>vue-first-app</TabTitle>
              <Slot $w={26}><MdClose size={26} /></Slot>
            </Tab>
            <Slot $w={32} $h={80} $ml={24} $c="#c7c7c7"><MdAdd size={32} /></Slot>
            <ChevronButton><MdKeyboardArrowDown size={28} /></ChevronButton>
          </TabStrip>
          <Toolbar $pl={22}>
            <Slot $c="#7f7f7f"><MdArrowBack size={36} /></Slot>
            <Slot $ml={31} $c="#7f7f7f"><MdArrowForward size={36} /></Slot>
            <Slot $ml={33}><MdRefresh size={38} /></Slot>
            <Omnibox $w={696} $ml={32}>
              <SiteInfo><MdOutlineInfo size={34} /></SiteInfo>
              <Address $ls={0.1}><b>localhost</b>:8080</Address>
              <Slot $w={34}><MdGTranslate size={34} /></Slot>
              <Slot $w={38} $ml={28}><MdStarBorder size={38} /></Slot>
            </Omnibox>
            <ToolbarTail />
          </Toolbar>
          <SurveyPage>
            <SurveyColumn>
              <Card $cut $h={510} $pt={5}>
                <FieldLabel>Your Name</FieldLabel>
                <TextField />
                <GroupTitle>My learning experience was ...</GroupTitle>
                <RadioList>
                  {["Poor", "Average", "Great"].map((l) => <RadioRow key={l}><RadioDot /><RadioText>{l}</RadioText></RadioRow>)}
                </RadioList>
                <ActionButton $w={227} $mt={16}>Submit</ActionButton>
              </Card>
              <Card $h={820} $pt={64}>
                <SectionTitle>Submitted Experiences</SectionTitle>
                <ActionButton $w={515} $mt={48}>Load Submitted Experiences</ActionButton>
                {results.map(([who, kind]) => (
                  <ResultItem key={who}><b>{who}</b> rated the learning experience <Rating $kind={kind}>{kind}</Rating>.</ResultItem>
                ))}
              </Card>
            </SurveyColumn>
            <PageScroll><PageThumb /></PageScroll>
          </SurveyPage>
        </Window>

        <Window $w={1521}>
          <TabStrip $pl={39}>
            <Lights><Light $c="#484848" /><Light $c="#484848" /><Light $c="#484848" /></Lights>
            <Tab $active $w={464} $ml={38}>
              <Slot $w={32}><FirebaseMark /></Slot>
              <TabTitle $fade={50}>vue-http-demo - Realtime Database</TabTitle>
              <Slot $w={26}><MdClose size={26} /></Slot>
            </Tab>
            <Slot $w={32} $h={80} $ml={24} $c="#c7c7c7"><MdAdd size={32} /></Slot>
            <ChevronButton><MdKeyboardArrowDown size={28} /></ChevronButton>
          </TabStrip>
          <Toolbar $pl={22} $dim>
            <Slot><MdArrowBack size={36} /></Slot>
            <Slot $ml={30}><MdArrowForward size={36} /></Slot>
            <Slot $ml={33}><MdRefresh size={38} /></Slot>
            <Omnibox $w={864} $ml={32}>
              <SiteInfo><Tune /></SiteInfo>
              <Address $ls={-0.14}><b>console.firebase.google.com</b>/project/vue-http-dem...</Address>
              <Slot $w={38} $c="#c7c7c7"><MdStarBorder size={38} /></Slot>
            </Omnibox>
            <ToolbarTail />
          </Toolbar>
          <Console>
            <ConsoleBar>
              <Slot $w={48} $c="#d7e2ff"><MdMenu size={48} /></Slot>
              <ProjectName>vue-http-demo</ProjectName>
              <Slot $w={48} $c="#d7e2ff"><MdArrowDropDown size={48} /></Slot>
              <Slot $w={48} $ml={779}><MdLightMode size={48} /></Slot>
              <Slot $w={48} $ml={32}><MdHelp size={48} /></Slot>
              <Slot $w={48} $ml={32}><MdNotifications size={48} /></Slot>
              <Slot $w={48} $ml={32}><MdMoreVert size={48} /></Slot>
              <Avatar $size={64} $ml={32} $fs={36}>D</Avatar>
            </ConsoleBar>
            <ConsoleTitle>Realtime Database</ConsoleTitle>
            <Tabs>
              <ConsoleTab $active $ml={1}>데이터</ConsoleTab>
              <ConsoleTab $ml={64}>규칙</ConsoleTab>
              <ConsoleTab $ml={64}>백업</ConsoleTab>
              <ConsoleTab $ml={64}>사용량</ConsoleTab>
              <TabRule />
              <Slot $w={30} $ml={31}><ExtensionMark /></Slot>
              <ExtensionsLabel>Extensions</ExtensionsLabel>
            </Tabs>
            <Banner>
              <Slot $w={48} $c="#b0c6ff"><MdSecurity size={48} /></Slot>
              <BannerText>결제 사기나 피싱과 같은 악용으로부터 <b>Realtime Database</b> 리소스를 보호하세요.</BannerText>
              <BannerLink>앱 체크 구성</BannerLink>
              <Slot $w={48} $ml={49}><MdClose size={48} /></Slot>
            </Banner>
            <Panel>
              <PanelHead>
                <Slot $w={48}><MdLink size={48} /></Slot>
                <DbUrl>https://vue-http-demo-365d5-default-rtdb.firebaseio.com</DbUrl>
                <Slot $w={48}><MdUnfoldMore size={52} /></Slot>
                <Slot $w={48} $ml={48}><MdUnfoldLess size={52} /></Slot>
                <Slot $w={48} $ml={48}><MdMoreVert size={48} /></Slot>
                <Slot $w={32} />
              </PanelHead>
              <PanelBody>
                <Tree>
                  <NodeRow $h={34}><Caret /><Dash />surveys</NodeRow>
                  <Branch>
                    {surveys.map(([key, name, rating], i) => (
                      <div key={key}>
                        <NodeHead $first={i === 0}><Caret /><Dash />{key}</NodeHead>
                        <Leaves $last={i === 2}>
                          <Leaf $first>name<Colon>:</Colon><Value>"{name}"</Value></Leaf>
                          <Leaf>rating<Colon>:</Colon><Value>"{rating}"</Value></Leaf>
                        </Leaves>
                      </div>
                    ))}
                  </Branch>
                </Tree>
                <TreeTrack><TreeThumb /></TreeTrack>
                <TreeFloor />
              </PanelBody>
            </Panel>
            <Location><MdLocationOn size={32} />데이터베이스 위치: 미국(us-central1)</Location>
          </Console>
        </Window>
      </Windows>

      <DockArea>
        <Dock>
          {dockApps.map(([Icon, running, badge], i) => (
            <DockItem key={i}>
              <Icon />
              {badge && <Badge>{badge}</Badge>}
              {running && <RunningDot />}
            </DockItem>
          ))}
          <DockRule />
          <DockExtra><Thumbnail /></DockExtra>
          <DockExtra><Trash /></DockExtra>
        </Dock>
      </DockArea>
    </Desktop>
  );
}
